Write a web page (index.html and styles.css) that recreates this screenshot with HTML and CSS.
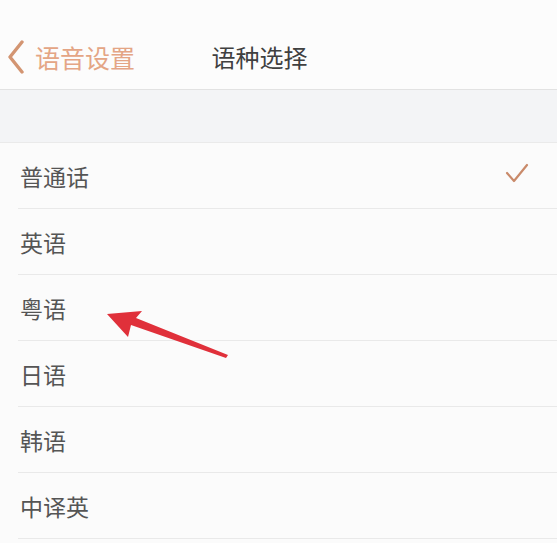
FILE: index.html
```html
<!DOCTYPE html>
<html lang="zh-CN">
<head>
<meta charset="utf-8">
<link rel="stylesheet" href="styles.css">
</head>
<body>
<div class="page">
  <header class="nav">
    <div class="back">
      <svg class="chev" width="20" height="34" viewBox="0 0 20 34"><path d="M16 2 L4 17 L16 32" fill="none" stroke="#d39572" stroke-width="3.4" stroke-linecap="round" stroke-linejoin="round"/></svg>
      <span class="back-text">语音设置</span>
    </div>
    <div class="title">语种选择</div>
  </header>
  <div class="band"></div>
  <ul class="list">
    <li class="row"><span>普通话</span><svg class="check" width="24" height="22" viewBox="0 0 24 22"><path d="M2 11 L9 19 L22 3" fill="none" stroke="#c98a6a" stroke-width="2.2" stroke-linecap="round" stroke-linejoin="round"/></svg></li>
    <li class="row"><span>英语</span></li>
    <li class="row"><span>粤语</span></li>
    <li class="row"><span>日语</span></li>
    <li class="row"><span>韩语</span></li>
    <li class="row"><span>中译英</span></li>
  </ul>
  <svg class="arrow" width="557" height="543" viewBox="0 0 557 543"><polygon points="107,314 142,311 136,318 228,355 226,358 131,325 128,337" fill="#e0303a"/></svg>
</div>
</body>
</html>
```
FILE: styles.css
```css
html, body { margin: 0; padding: 0; }
body {
  background: #fbfbfb;
  font-family: "Noto Sans CJK SC", "Noto Sans", sans-serif;
  width: 557px;
  height: 543px;
  overflow: hidden;
}
.page { position: relative; width: 557px; height: 543px; }
.nav {
  position: relative;
  height: 89px;
  border-bottom: 1px solid #e2e2e2;
  background: #fcfcfc;
  display: flex;
  align-items: center;
  justify-content: center;
}
.back {
  position: absolute;
  left: 6px;
  top: 40px;
  display: flex;
  align-items: center;
  height: 34px;
}
.chev { display: block; }
.back-text {
  margin-left: 9px;
  font-size: 25px;
  color: #e4a585;
  line-height: 34px;
}
.title {
  font-size: 24px;
  color: #404040;
  margin-top: 24px;
  margin-right: 38px;
}
.band {
  height: 52px;
  background: #f3f4f6;
  border-bottom: 1px solid #eaeaea;
}
.list {
  list-style: none;
  margin: 0;
  padding: 0 0 0 18px;
}
.row {
  height: 65px;
  border-bottom: 1px solid #e9e9e9;
  display: flex;
  align-items: center;
  justify-content: space-between;
  padding: 0 28px 0 2px;
  font-size: 23px;
  color: #555;
}
.row span { position: relative; top: 0; }
.check { display: block; margin-top: -6px; }
.arrow { position: absolute; left: 0; top: 0; pointer-events: none; }
```
